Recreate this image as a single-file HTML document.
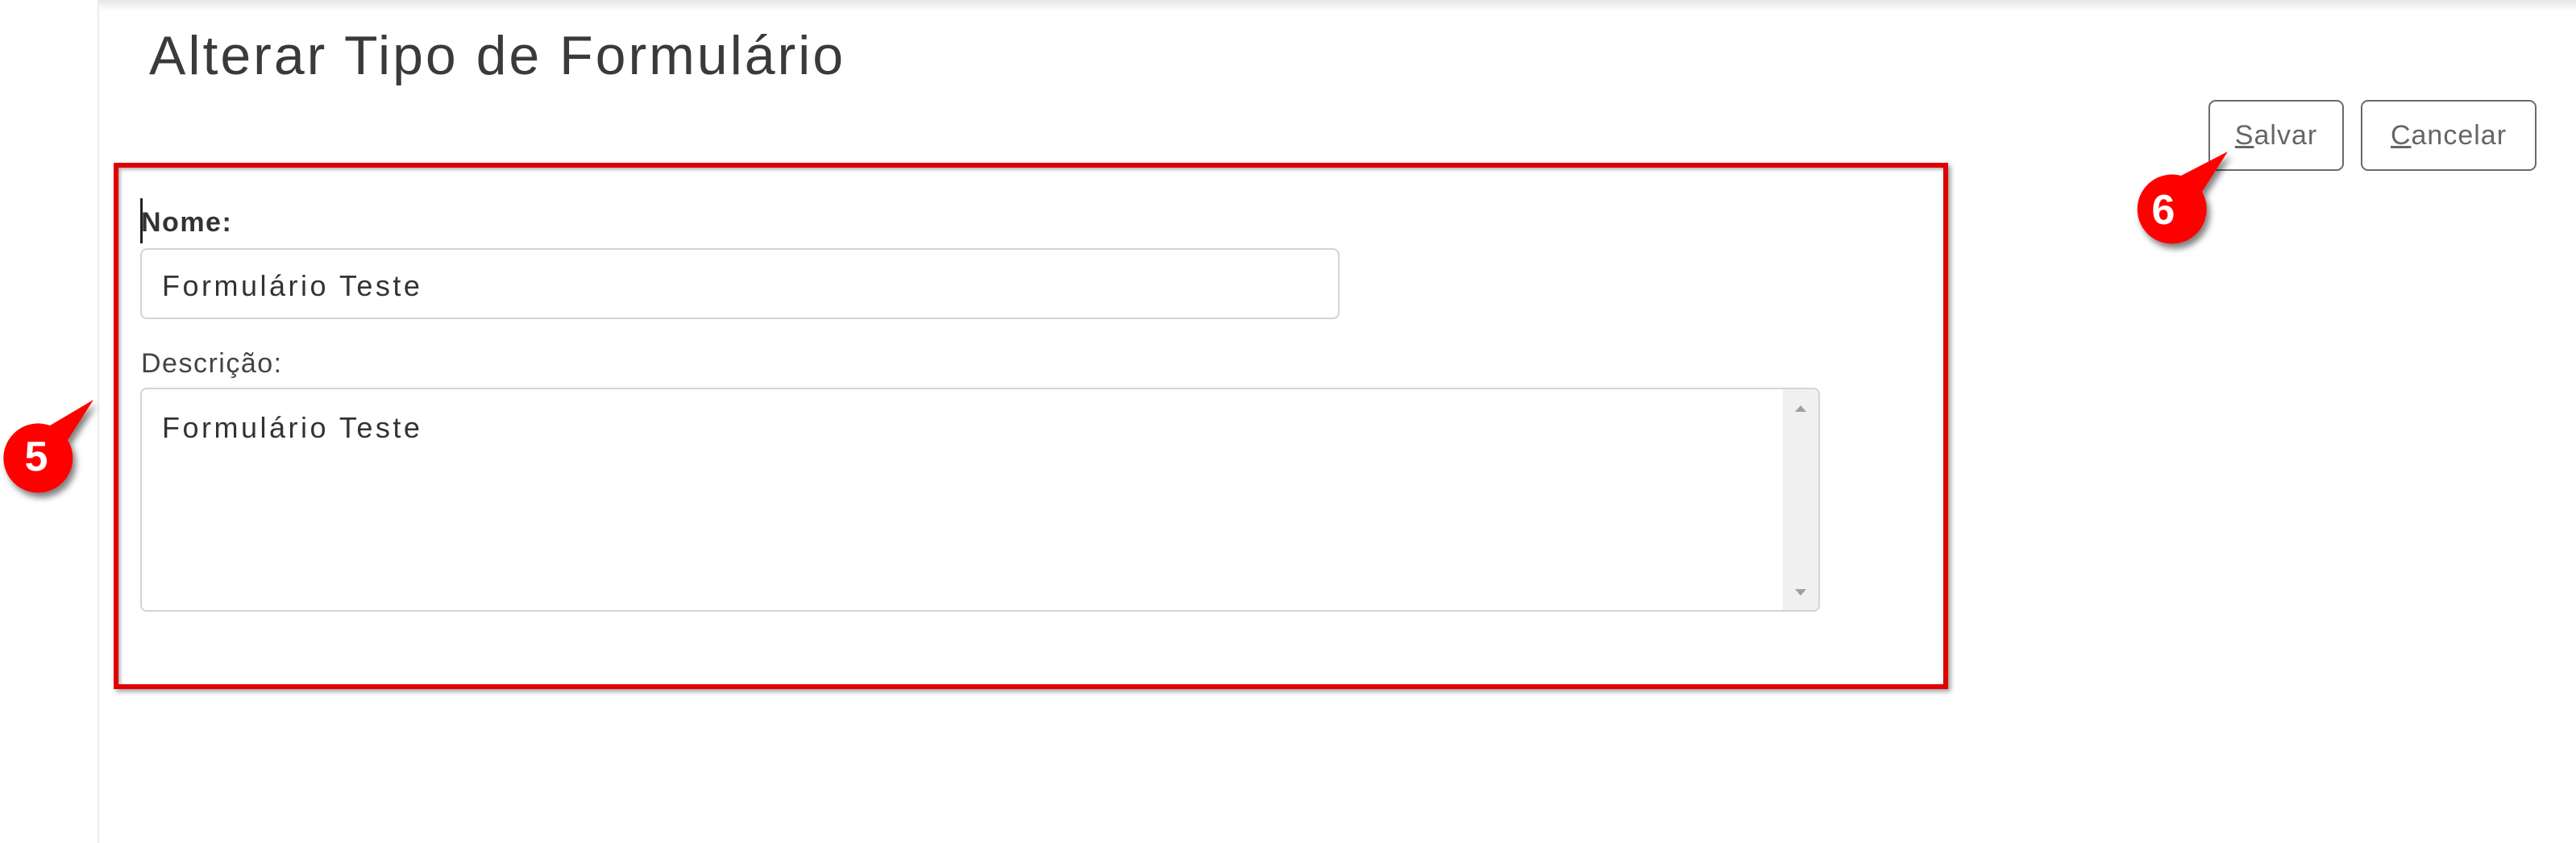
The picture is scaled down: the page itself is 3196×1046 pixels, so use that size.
<!DOCTYPE html>
<html><head><meta charset="utf-8"><style>
html,body{margin:0;padding:0;background:#fff;width:3196px;height:1046px;overflow:hidden;position:relative;font-family:"Liberation Sans",sans-serif;color:#333}
.topbar{position:absolute;left:122px;top:0;width:3074px;height:14px;background:linear-gradient(#e6e6e6,#fff)}
.side{position:absolute;left:121px;top:0;width:2px;height:1046px;background:#ececec}
.title{position:absolute;left:185px;top:30px;font-size:68px;letter-spacing:3px;color:#3a3a3a}
.btn{position:absolute;top:124px;height:88px;border:2px solid #6a6a6a;border-radius:9px;box-sizing:border-box;font-size:34px;letter-spacing:1px;color:#666;display:flex;align-items:center;justify-content:center}
.box{position:absolute;left:141px;top:202px;width:2276px;height:653px;border:6px solid #e00000;box-sizing:border-box;box-shadow:3px 3px 6px rgba(0,0,0,.4),inset 2px 2px 5px rgba(0,0,0,.35)}
.lbl{position:absolute;left:175px;font-size:34px;letter-spacing:1.5px}
.inp{position:absolute;left:174px;top:308px;width:1488px;height:88px;border:2px solid #d3d3d8;border-radius:8px;box-sizing:border-box;font-size:36px;letter-spacing:3.5px;padding:24px 0 0 25px;color:#333}
.ta{position:absolute;left:174px;top:481px;width:2084px;height:278px;border:2px solid #d3d3d8;border-radius:8px;box-sizing:border-box;font-size:36px;letter-spacing:3.5px;padding:27px 0 0 25px;color:#333}
.sb{position:absolute;right:0;top:0;width:44px;height:100%;background:#f0f0f0;border-radius:0 6px 6px 0}
</style></head><body>
<div class="topbar"></div><div class="side"></div>
<div class="title">Alterar Tipo de Formulário</div>
<div class="btn" style="left:2740px;width:168px"><span><u>S</u>alvar</span></div>
<div class="btn" style="left:2929px;width:218px"><span><u>C</u>ancelar</span></div>
<div class="box"></div>
<div style="position:absolute;left:174px;top:246px;width:3px;height:56px;background:#222"></div>
<div class="lbl" style="top:257px;font-weight:bold">Nome:</div>
<div class="inp">Formulário Teste</div>
<div class="lbl" style="top:432px;color:#444">Descrição:</div>
<div class="ta">Formulário Teste<div class="sb">
<svg width="44" height="274" style="position:absolute;left:0;top:0"><path d="M15 28 L29 28 L22 20Z" fill="#a0a0a0"/><path d="M15 248 L29 248 L22 256Z" fill="#a0a0a0"/></svg></div></div>
<svg width="3196" height="1046" style="position:absolute;left:0;top:0">
<defs><filter id="s"><feDropShadow dx="4" dy="6" stdDeviation="4" flood-opacity=".5"/></filter></defs>
<g filter="url(#s)">
<path d="M116 496 L84 546 A43 43 0 1 1 62 528 Z" fill="#f00"/>
<path d="M2764 188 L2732 238 A43 43 0 1 1 2706 218 Z" fill="#f00"/>
</g>
<text x="45" y="584" font-size="52" font-weight="bold" fill="#fff" text-anchor="middle" font-family="Liberation Sans">5</text>
<text x="2684" y="278" font-size="52" font-weight="bold" fill="#fff" text-anchor="middle" font-family="Liberation Sans">6</text>
</svg>
</body></html>
